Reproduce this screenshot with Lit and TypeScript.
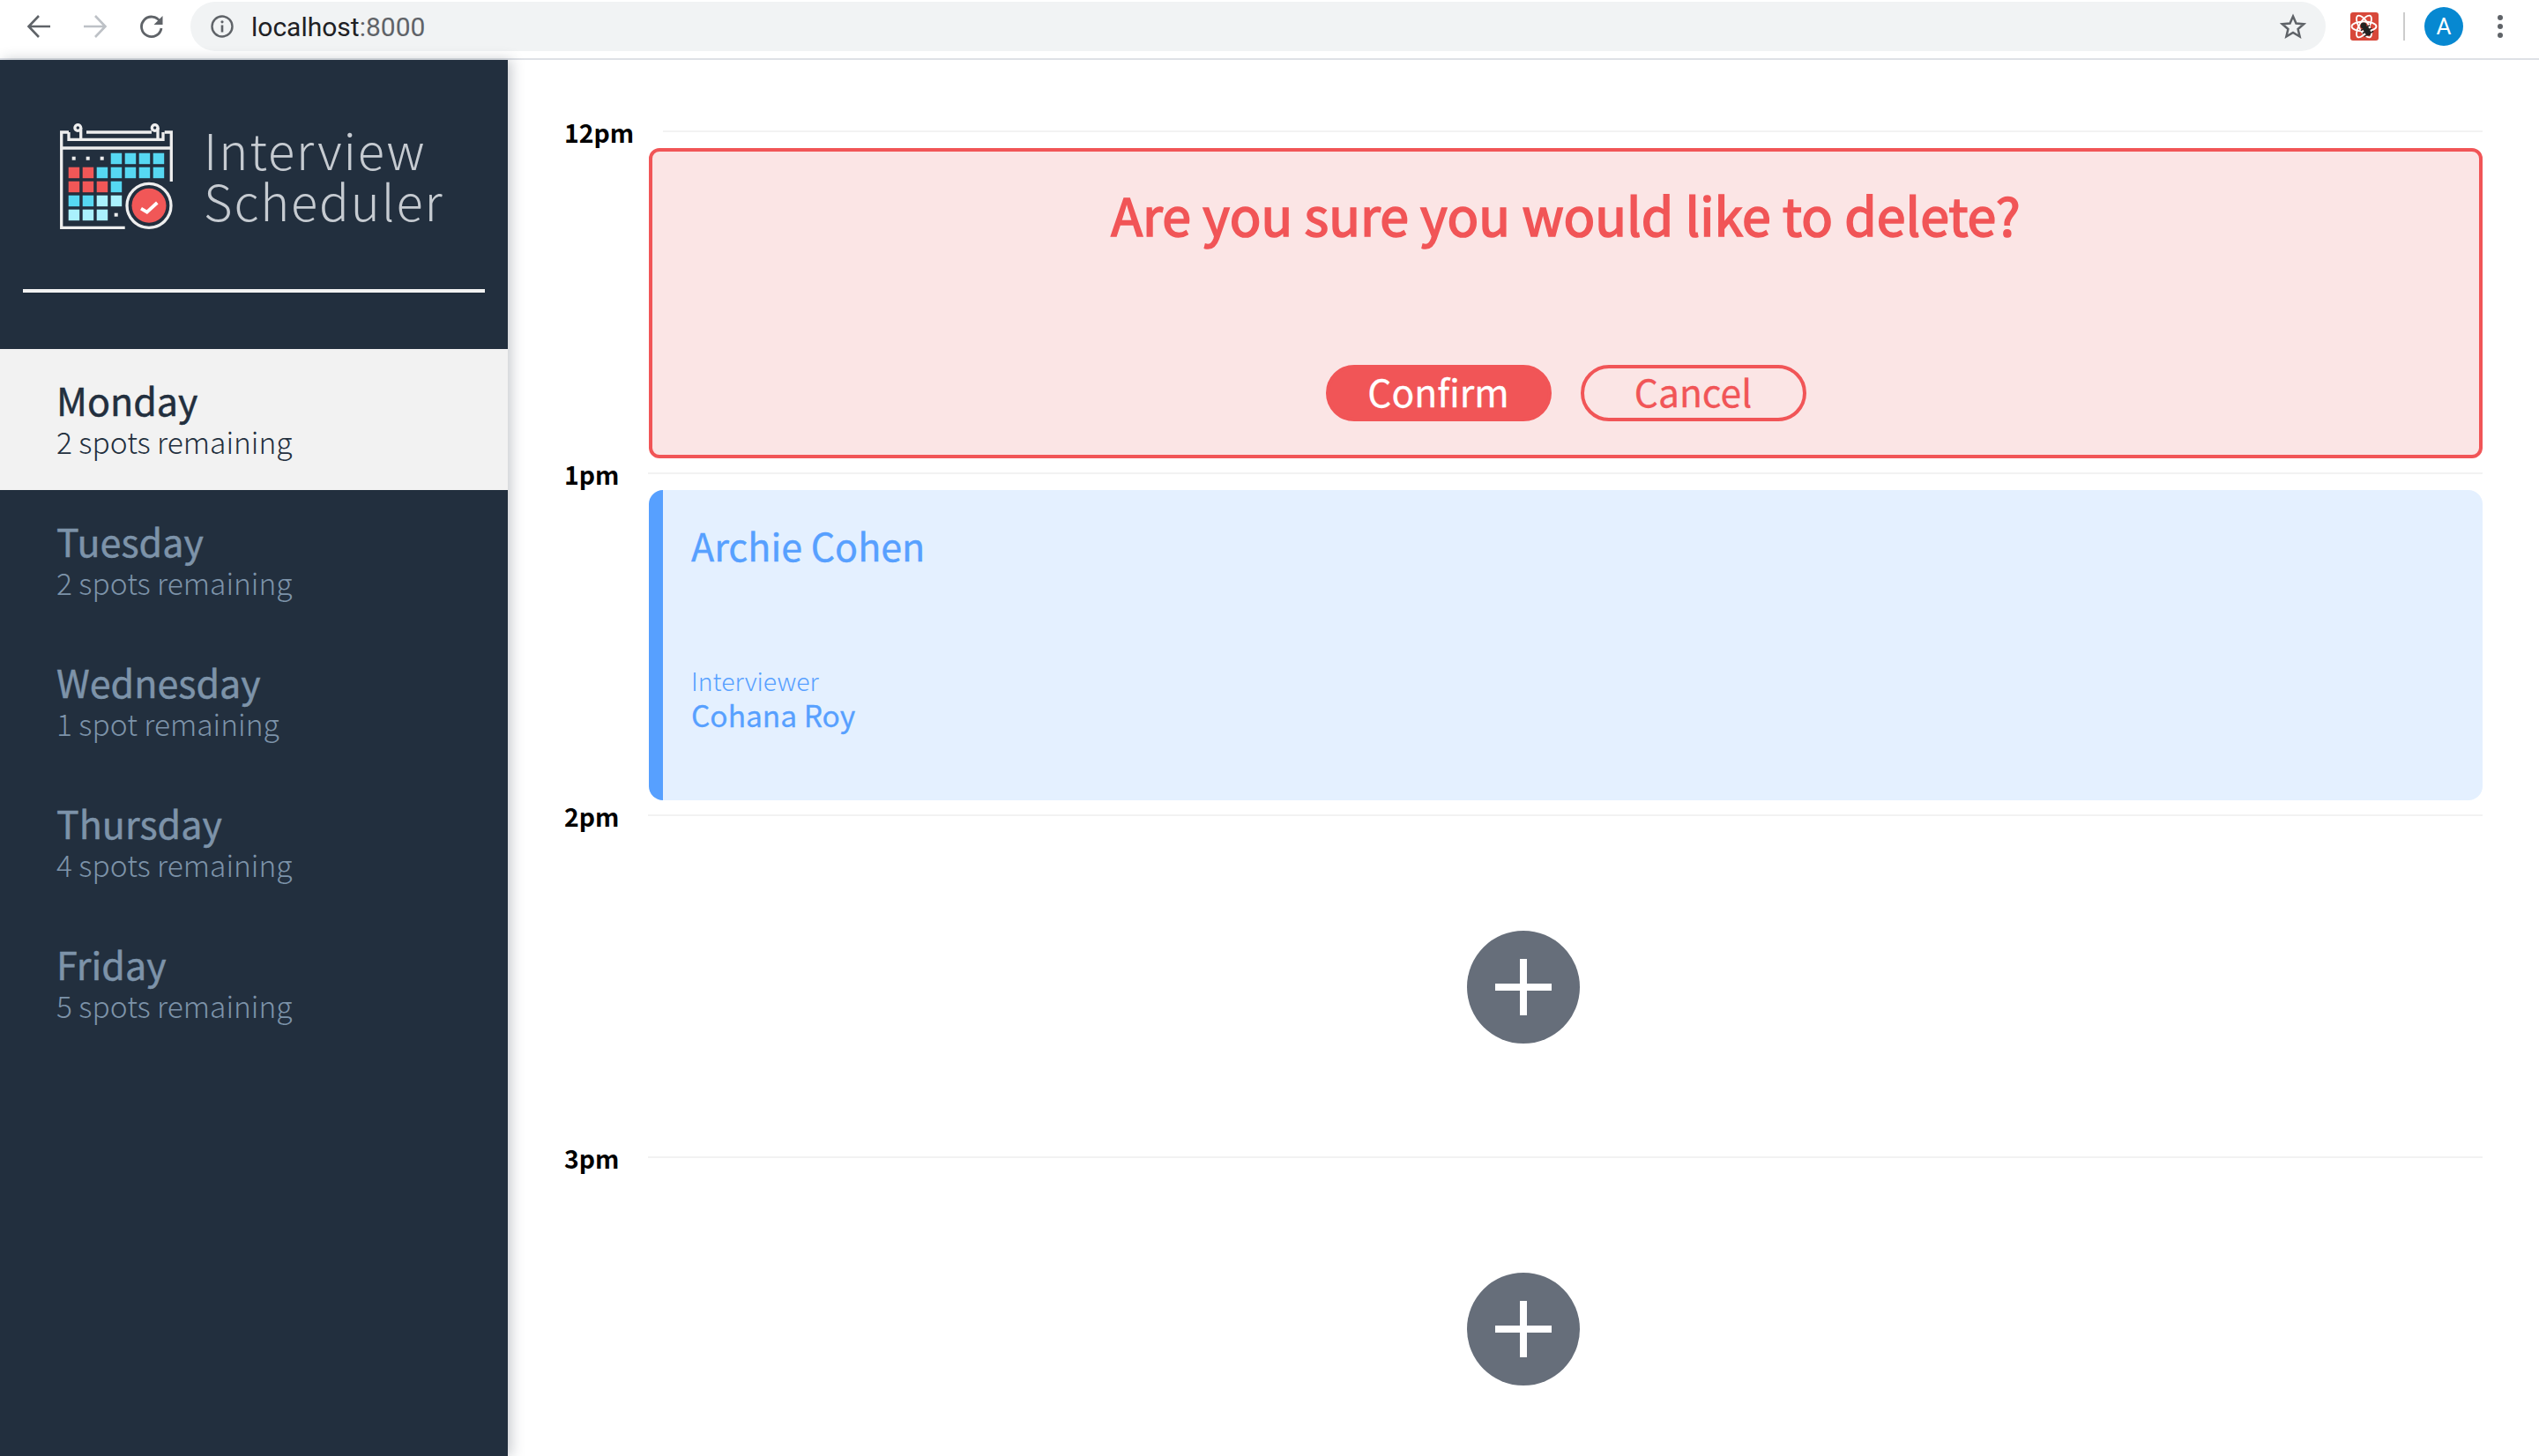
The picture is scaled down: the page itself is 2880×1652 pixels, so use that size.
import { LitElement, css, html, svg } from "lit";
import { customElement, property } from "lit/decorators.js";

const SANS = css`"Noto Sans CJK SC", "Open Sans", sans-serif`;

@customElement("browser-bar")
export class BrowserBar extends LitElement {
  render() {
    return html`
      <div class="bar">
        <svg class="nav" width="28" height="28" viewBox="0 0 28 28" fill="none" stroke="#5f6368" stroke-width="2.6">
          <path d="M27 14H3M14 2 2.5 14 14 26" />
        </svg>
        <svg class="nav" width="28" height="28" viewBox="0 0 28 28" fill="none" stroke="#bdc1c6" stroke-width="2.6">
          <path d="M1 14h24M14 2l11.500 12L14 26" />
        </svg>
        <svg class="nav" width="28" height="28" viewBox="0 0 28 28" fill="none">
          <path d="M23.500 8.500A11.300 11.300 0 1 0 25 16" stroke="#5f6368" stroke-width="2.800" />
          <path d="M26.500 2v10h-10z" fill="#5f6368" />
        </svg>
        <div class="omnibox">
          <svg width="26" height="26" viewBox="0 0 26 26" fill="none">
            <circle cx="13" cy="13" r="11.500" stroke="#5f6368" stroke-width="2.400" />
            <path d="M13 11.500V19.500" stroke="#5f6368" stroke-width="2.600" />
            <circle cx="13" cy="7.800" r="1.600" fill="#5f6368" />
          </svg>
          <span class="url">localhost<span class="port">:8000</span></span>
          <svg class="star" width="30" height="30" viewBox="0 0 30 30" fill="none">
            <path d="M15 3.500l3.500 8 8.700.800-6.600 5.700 2 8.500L15 22l-7.600 4.500 2-8.500-6.600-5.700 8.700-.800z" stroke="#5f6368" stroke-width="2.500" stroke-linejoin="miter" />
          </svg>
        </div>
        <svg class="ext" width="32" height="32" viewBox="0 0 32 32" fill="none">
          <rect width="32" height="32" rx="3" fill="#d8483a" />
          <g stroke="#fff" stroke-width="1.800">
            <ellipse cx="15.500" cy="16" rx="14" ry="5.500" />
            <ellipse cx="15.500" cy="16" rx="14" ry="5.500" transform="rotate(60 15.500 16)" />
            <ellipse cx="15.500" cy="16" rx="14" ry="5.500" transform="rotate(120 15.500 16)" />
          </g>
          <circle cx="15" cy="15" r="3.500" fill="#222" />
          <g transform="rotate(-30 19 21)">
            <ellipse cx="19" cy="21" rx="3.500" ry="6" fill="#222" />
            <path d="M13 17h12M13 21h12M13 25h12" stroke="#222" stroke-width="1.500" />
          </g>
        </svg>
        <div class="sep"></div>
        <div class="avatar">A</div>
        <div class="dots"><i></i><i></i><i></i></div>
      </div>
    `;
  }

  static styles = css`
    :host {
      display: block;
    }
    .bar {
      height: 68px;
      box-sizing: border-box;
      border-bottom: 2px solid #dee1e6;
      background: #fff;
      display: flex;
      align-items: center;
      padding: 0 0 6px 30px;
    }
    .nav {
      flex: none;
      margin-right: 36px;
    }
    .omnibox {
      margin-left: -6px;
      flex: none;
      width: 2422px;
      height: 56px;
      border-radius: 28px;
      background: #f1f3f4;
      display: flex;
      align-items: center;
      padding: 0 22px 0 23px;
      box-sizing: border-box;
    }
    .url {
      margin-left: 20px;
      font: 30px Roboto, sans-serif;
      color: #202124;
    }
    .port {
      color: #5f6368;
    }
    .star {
      margin-left: auto;
    }
    .ext {
      flex: none;
      margin-left: 28px;
    }
    .sep {
      width: 2px;
      height: 32px;
      margin-left: 28px;
      background: #ccc;
    }
    .avatar {
      width: 44px;
      height: 44px;
      margin-left: 22px;
      border-radius: 50%;
      background: #0788d1;
      color: #fff;
      font: 26px Roboto, sans-serif;
      display: flex;
      align-items: center;
      justify-content: center;
    }
    .dots {
      margin-left: 39px;
      display: flex;
      flex-direction: column;
      gap: 4px;
    }
    .dots i {
      width: 6px;
      height: 6px;
      border-radius: 50%;
      background: #5f6368;
    }
  `;
}

// 7 x 5 のマス目: c=cyan r=red l=light .=dot
const LOGO_GRID = ["...cccc", "rrccccc", "rrrc   ", "ccll   ", "lll.   "];
const LOGO_COLORS: Record<string, string> = {
  c: "#56d8f2",
  r: "#f15757",
  l: "#aaf1fd",
};

const logoCells = () =>
  LOGO_GRID.flatMap((row, y) =>
    [...row].map((ch, x) => {
      const px = 9.7 + x * 16;
      const py = 33.7 + y * 16;
      if (ch === ".") {
        return svg`<rect x=${px + 4} y=${py + 4} width="4" height="4" fill="#eee" />`;
      }
      if (ch === " ") return null;
      return svg`<rect x=${px} y=${py} width="12.500" height="12.500" fill=${LOGO_COLORS[ch]} />`;
    })
  );

@customElement("side-bar")
export class SideBar extends LitElement {
  @property({ type: Array })
  days: { name: string; spots: string }[] = [];

  @property()
  selected = "";

  render() {
    return html`
      <div class="brand">
        <svg width="128" height="120" viewBox="0 0 128 120" fill="none">
          <g stroke="#eee" stroke-width="3.300">
            <path d="M10 10H1.700V118.300H73.700" />
            <path d="M1.700 28H126.300" />
            <path d="M118.700 10H126.300V66" />
            <path d="M30 10H104" />
            <path d="M10 10V18.300H117V10" />
            <circle cx="20.300" cy="5" r="3.400" />
            <circle cx="107.700" cy="5" r="3.400" />
            <path d="M23.700 5V18M111 5V18" />
          </g>
          ${logoCells()}
          <circle cx="101" cy="93.300" r="25" stroke="#eee" stroke-width="3.300" />
          <circle cx="101" cy="93.300" r="19.500" fill="#f15757" />
          <path d="M92 96.700 98.700 100.700 110.300 90" stroke="#fff" stroke-width="3.800" />
        </svg>
        <div class="title">Interview<br />Scheduler</div>
      </div>
      <div class="rule"></div>
      <ul>
        ${this.days.map(
          (d) => html`
            <li class=${d.name === this.selected ? "on" : ""}>
              <h2>${d.name}</h2>
              <p>${d.spots}</p>
            </li>
          `
        )}
      </ul>
    `;
  }

  static styles = css`
    :host {
      display: block;
      flex: none;
      width: 576px;
      height: 100%;
      background: #222f3e;
      box-shadow: 4px 0 14px rgba(34, 47, 62, 0.25);
      font-family: ${SANS};
      position: relative;
    }
    .brand {
      display: flex;
      padding: 72px 0 0 68px;
      height: 188px;
      box-sizing: border-box;
    }
    .brand svg {
      flex: none;
    }
    .title {
      margin: 0 0 0 35px;
      font-size: 56px;
      font-weight: 300;
      line-height: 58px;
      letter-spacing: 1.900px;
      color: #c6cbd1;
    }
    .rule {
      height: 4px;
      margin: 72px 26px 0;
      background: #f2f2f2;
    }
    ul {
      list-style: none;
      margin: 64px 0 0;
      padding: 0;
    }
    li {
      height: 160px;
      padding: 30px 0 0 64px;
      box-sizing: border-box;
      color: #7d93a9;
    }
    li.on {
      background: #f2f2f2;
      color: #222f3e;
    }
    h2 {
      margin: 0;
      font-size: 43px;
      font-weight: 400;
      line-height: 55px;
      -webkit-text-stroke: 0.5px currentColor;
    }
    p {
      margin: 0;
      font-size: 33.500px;
      font-weight: 300;
      line-height: 40px;
    }
  `;
}

@customElement("hour-row")
export class HourRow extends LitElement {
  @property()
  time = "";

  render() {
    return html`
      <div class="time">
        <span>${this.time}</span>
        <hr />
      </div>
      <div class="slot"><slot></slot></div>
    `;
  }

  static styles = css`
    :host {
      display: block;
      height: 388px;
    }
    .time {
      height: 34px;
      display: flex;
      align-items: center;
      gap: 33px;
    }
    span {
      font-size: 28.400px;
      font-weight: 700;
      color: #000;
    }
    hr {
      flex: 1;
      height: 2px;
      margin: 0;
      border: 0;
      background: #f2f2f2;
    }
    .slot {
      margin: 2px 0 0 96px;
      height: 352px;
    }
  `;
}

@customElement("app-root")
export class AppRoot extends LitElement {
  private _days = [
    { name: "Monday", spots: "2 spots remaining" },
    { name: "Tuesday", spots: "2 spots remaining" },
    { name: "Wednesday", spots: "1 spot remaining" },
    { name: "Thursday", spots: "4 spots remaining" },
    { name: "Friday", spots: "5 spots remaining" },
  ];

  private _addButton() {
    return html`
      <div class="add">
        <svg width="128" height="128" viewBox="0 0 128 128">
          <circle cx="64" cy="64" r="64" fill="#666e7a" />
          <path d="M32 64H96M64 32V96" stroke="#fff" stroke-width="8" />
        </svg>
      </div>
    `;
  }

  render() {
    return html`
      <browser-bar></browser-bar>
      <div class="page">
        <side-bar .days=${this._days} selected="Monday"></side-bar>
        <main>
          <hour-row time="12pm">
            <section class="confirm">
              <h1>Are you sure you would like to delete?</h1>
              <div class="actions">
                <button class="danger">Confirm</button>
                <button class="outline">Cancel</button>
              </div>
            </section>
          </hour-row>
          <hour-row time="1pm">
            <section class="appt">
              <h3>Archie Cohen</h3>
              <small>Interviewer</small>
              <strong>Cohana Roy</strong>
            </section>
          </hour-row>
          <hour-row time="2pm">${this._addButton()}</hour-row>
          <hour-row time="3pm">${this._addButton()}</hour-row>
        </main>
      </div>
    `;
  }

  static styles = css`
    :host {
      display: flex;
      flex-direction: column;
      height: 100vh;
      overflow: hidden;
      background: #fff;
      font-family: ${SANS};
    }
    .page {
      flex: 1;
      display: flex;
      min-height: 0;
    }
    main {
      flex: 1;
      padding: 64px 64px 0 64px;
      overflow: hidden;
    }
    .confirm {
      height: 100%;
      box-sizing: border-box;
      border: 4px solid #f15557;
      border-radius: 12px;
      background: #fbe5e5;
      color: #f15557;
      display: flex;
      flex-direction: column;
      align-items: center;
      padding-top: 35px;
    }
    h1 {
      margin: 0;
      font-size: 59px;
      font-weight: 400;
      line-height: 72px;
      -webkit-text-stroke: 1.700px currentColor;
    }
    .actions {
      display: flex;
      gap: 33px;
      margin-top: 135px;
    }
    button {
      width: 256px;
      height: 64px;
      padding: 0 0 4px;
      box-sizing: border-box;
      border: 4px solid #f15557;
      border-radius: 32px;
      font: 400 42.600px/1 ${SANS};
      -webkit-text-stroke: 0.3px currentColor;
      color: #f15557;
      background: transparent;
    }
    .danger {
      background: #f15557;
      color: #fff;
    }
    .appt {
      height: 100%;
      box-sizing: border-box;
      border-left: 16px solid #57a0ff;
      border-radius: 16px;
      background: #e4f0ff;
      color: #57a0ff;
      padding: 34px 0 0 32px;
      display: flex;
      flex-direction: column;
      align-items: flex-start;
    }
    h3 {
      margin: 0;
      font-size: 43px;
      font-weight: 400;
      line-height: 56px;
      -webkit-text-stroke: 0.4px currentColor;
    }
    small {
      margin-top: 108px;
      font-size: 28.400px;
      font-weight: 300;
      line-height: 36px;
    }
    strong {
      font-size: 33.500px;
      font-weight: 400;
      line-height: 42px;
      -webkit-text-stroke: 0.3px currentColor;
    }
    .add {
      height: 100%;
      display: flex;
      align-items: center;
      justify-content: center;
      padding-right: 96px;
    }
  `;
}
